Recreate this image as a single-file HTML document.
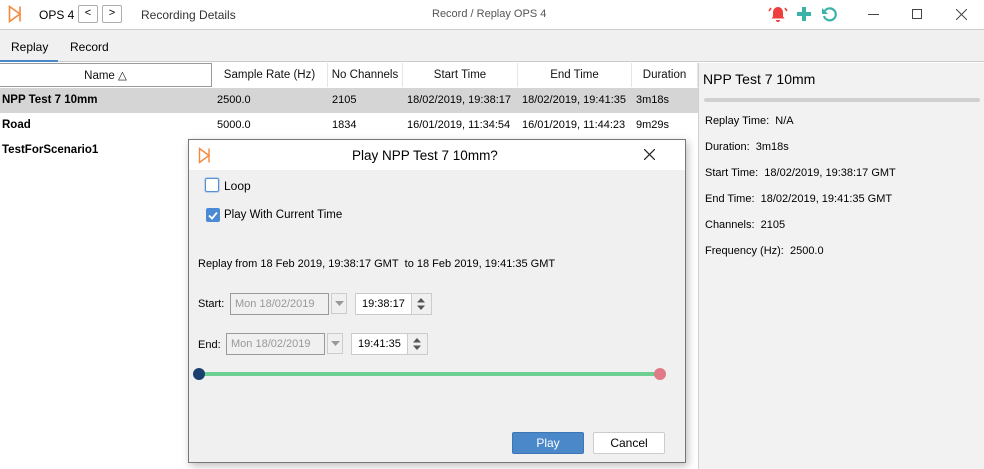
<!DOCTYPE html>
<html><head><style>
*{box-sizing:border-box;margin:0;padding:0}
body{width:984px;height:469px;overflow:hidden;font-family:"Liberation Sans",sans-serif;font-size:11px;color:#000;background:#fff;position:relative}
.a{position:absolute;white-space:nowrap}
.btn{position:absolute;border:1px solid #adadad;background:#fff;border-radius:2px;text-align:center}
.hd{position:absolute;top:63px;height:24px;line-height:24px;text-align:center;border-right:1px solid #e5e5e5;color:#111;font-size:11.5px}
.c{position:absolute;line-height:24px}
</style></head><body>
<div class="a" style="left:0;top:0;width:984px;height:30px;background:#fff;border-bottom:1px solid #ccc"></div>
<svg class="a" style="left:8px;top:5px" width="14" height="18" viewBox="0 0 14 18"><path d="M1.5 1.5 L12 9 L1.5 16.5 Z M12 1.5 V16.5" fill="none" stroke="#f7883c" stroke-width="1.6"/></svg>
<div class="a" style="left:39px;top:8px;font-size:12px">OPS 4</div>
<div class="btn" style="left:78px;top:5px;width:20px;height:18px;line-height:15px">&lt;</div>
<div class="btn" style="left:102px;top:5px;width:20px;height:18px;line-height:15px">&gt;</div>
<div class="a" style="left:141px;top:8px;color:#333;font-size:12px">Recording Details</div>
<div class="a" style="left:432px;top:8px;color:#555">Record / Replay OPS 4</div>
<svg class="a" style="left:768px;top:4px" width="20" height="20" viewBox="0 0 20 20"><path d="M10 3c-3 0-5 2.5-5 5.5v4l-1.5 2h13l-1.5-2v-4C15 5.5 13 3 10 3z M8 16h4a2 2 0 0 1-4 0z" fill="#ef3e3e"/><path d="M3 4l-2 3M17 4l2 3" stroke="#ef3e3e" stroke-width="1.6"/></svg>
<svg class="a" style="left:795px;top:5px" width="18" height="18"><path d="M9 2v14M2 9h14" stroke="#3cb3a8" stroke-width="4"/></svg>
<svg class="a" style="left:820px;top:5px" width="18" height="18" viewBox="0 0 18 18"><path d="M4.5 6.5A6 6 0 1 1 4 11" fill="none" stroke="#3cb3a8" stroke-width="2.2"/><path d="M2 3v6h6z" fill="#3cb3a8"/></svg>
<div class="a" style="left:868px;top:14px;width:11px;height:1px;background:#444"></div>
<div class="a" style="left:912px;top:9px;width:10px;height:10px;border:1px solid #444"></div>
<svg class="a" style="left:956px;top:9px" width="11" height="11"><path d="M0 0L11 11M11 0L0 11" stroke="#444"/></svg>
<div class="a" style="left:0;top:30px;width:984px;height:32px;background:#f0f0f0;border-bottom:1px solid #ccc"></div>
<div class="a" style="left:11px;top:40px;font-size:12px">Replay</div>
<div class="a" style="left:70px;top:40px;font-size:12px">Record</div>
<div class="a" style="left:0;top:60px;width:58px;height:2px;background:#4a88c7"></div>
<div class="hd" style="left:0;width:212px;border:1px solid #999;border-left:0">Name △</div>
<div class="hd" style="left:212px;width:116px">Sample Rate (Hz)</div>
<div class="hd" style="left:328px;width:75px">No Channels</div>
<div class="hd" style="left:403px;width:115px">Start Time</div>
<div class="hd" style="left:518px;width:114px">End Time</div>
<div class="hd" style="left:632px;width:66px">Duration</div>
<div class="a" style="left:0;top:88px;width:698px;height:25px;background:#d5d5d5"></div>
<div class="c" style="left:2px;top:88px;font-weight:bold;font-size:11.5px">NPP Test 7 10mm</div>
<div class="c" style="left:217px;top:88px">2500.0</div><div class="c" style="left:332px;top:88px">2105</div>
<div class="c" style="left:407px;top:88px">18/02/2019, 19:38:17</div><div class="c" style="left:522px;top:88px">18/02/2019, 19:41:35</div><div class="c" style="left:636px;top:88px">3m18s</div>
<div class="c" style="left:2px;top:113px;font-weight:bold;font-size:11.5px">Road</div>
<div class="c" style="left:217px;top:113px">5000.0</div><div class="c" style="left:332px;top:113px">1834</div>
<div class="c" style="left:407px;top:113px">16/01/2019, 11:34:54</div><div class="c" style="left:522px;top:113px">16/01/2019, 11:44:23</div><div class="c" style="left:636px;top:113px">9m29s</div>
<div class="c" style="left:2px;top:138px;font-weight:bold;font-size:11.5px">TestForScenario1</div>
<div class="a" style="left:698px;top:63px;width:286px;height:406px;background:#f2f2f2;border-left:1px solid #d0d0d0"></div>
<div class="a" style="left:703px;top:71px;font-size:14px">NPP Test 7 10mm</div>
<div class="a" style="left:704px;top:98px;width:276px;height:4px;background:#d0d0d0;border-radius:2px"></div>
<div class="a" style="left:705px;top:115px">Replay Time:&nbsp; N/A</div>
<div class="a" style="left:705px;top:141px">Duration:&nbsp; 3m18s</div>
<div class="a" style="left:705px;top:167px">Start Time:&nbsp; 18/02/2019, 19:38:17 GMT</div>
<div class="a" style="left:705px;top:193px">End Time:&nbsp; 18/02/2019, 19:41:35 GMT</div>
<div class="a" style="left:705px;top:219px">Channels:&nbsp; 2105</div>
<div class="a" style="left:705px;top:245px">Frequency (Hz):&nbsp; 2500.0</div>
<div class="a" style="left:188px;top:139px;width:498px;height:324px;background:#f0f0f0;border:1px solid #777;box-shadow:2px 3px 8px rgba(0,0,0,.25)"></div>
<div class="a" style="left:189px;top:140px;width:496px;height:30px;background:#fff"></div>
<svg class="a" style="left:198px;top:147px" width="13" height="17" viewBox="0 0 13 17"><path d="M1.5 1.5 L11 8.5 L1.5 15.5 Z M11 1.5 V15.5" fill="none" stroke="#f7883c" stroke-width="1.4"/></svg>
<div class="a" style="left:352px;top:148px;font-size:13.5px">Play NPP Test 7 10mm?</div>
<svg class="a" style="left:644px;top:149px" width="11" height="11"><path d="M0 0L11 11M11 0L0 11" stroke="#222" stroke-width="1.2"/></svg>
<div class="a" style="left:205px;top:178px;width:14px;height:14px;border:1px solid #5b8fd0;background:#fff;border-radius:2px;box-shadow:0 0 0 1px #bcd3ee"></div>
<div class="a" style="left:224px;top:179px;font-size:12px">Loop</div>
<div class="a" style="left:206px;top:208px;width:14px;height:14px;background:#4a8ad4;border-radius:2px"></div>
<svg class="a" style="left:206px;top:208px" width="14" height="14"><path d="M3 7.5l3 3 5-6" fill="none" stroke="#fff" stroke-width="1.8"/></svg>
<div class="a" style="left:224px;top:209px;font-size:11.5px">Play With Current Time</div>
<div class="a" style="left:198px;top:258px">Replay from 18 Feb 2019, 19:38:17 GMT&nbsp; to 18 Feb 2019, 19:41:35 GMT</div>
<div class="a" style="left:198px;top:298px">Start:</div>
<div class="a" style="left:230px;top:293px;width:99px;height:22px;border:1px solid #999;background:#f0f0f0;color:#999;line-height:20px;padding-left:4px">Mon 18/02/2019</div>
<div class="a" style="left:331px;top:293px;width:16px;height:21px;border:1px solid #ccc;background:#f0f0f0"></div>
<svg class="a" style="left:335px;top:301px" width="9" height="5"><path d="M0 0h9L4.5 5z" fill="#999"/></svg>
<div class="a" style="left:355px;top:293px;width:56px;height:22px;border:1px solid #ccc;border-right:0;background:#fff;line-height:20px;padding-left:6px">19:38:17</div>
<div class="a" style="left:411px;top:293px;width:21px;height:22px;border:1px solid #ccc;background:#f0f0f0"></div>
<svg class="a" style="left:416px;top:297px" width="10" height="14"><path d="M1 5.5h8L5 1zM1 8.5h8L5 13z" fill="#555"/></svg>
<div class="a" style="left:198px;top:339px">End:</div>
<div class="a" style="left:226px;top:333px;width:99px;height:22px;border:1px solid #999;background:#f0f0f0;color:#999;line-height:20px;padding-left:4px">Mon 18/02/2019</div>
<div class="a" style="left:327px;top:333px;width:16px;height:21px;border:1px solid #ccc;background:#f0f0f0"></div>
<svg class="a" style="left:331px;top:341px" width="9" height="5"><path d="M0 0h9L4.5 5z" fill="#999"/></svg>
<div class="a" style="left:351px;top:333px;width:56px;height:22px;border:1px solid #ccc;border-right:0;background:#fff;line-height:20px;padding-left:6px">19:41:35</div>
<div class="a" style="left:407px;top:333px;width:21px;height:22px;border:1px solid #ccc;background:#f0f0f0"></div>
<svg class="a" style="left:412px;top:337px" width="10" height="14"><path d="M1 5.5h8L5 1zM1 8.5h8L5 13z" fill="#555"/></svg>
<div class="a" style="left:198px;top:372px;width:462px;height:4px;background:#6dcf94"></div>
<div class="a" style="left:193px;top:368px;width:12px;height:12px;border-radius:50%;background:#1b3f6e"></div>
<div class="a" style="left:654px;top:368px;width:12px;height:12px;border-radius:50%;background:#e07a86"></div>
<div class="a" style="left:512px;top:432px;width:72px;height:22px;background:#4a88c9;border:1px solid #3c76b4;border-radius:2px;color:#fff;text-align:center;line-height:20px;font-size:12px">Play</div>
<div class="btn" style="left:593px;top:432px;width:72px;height:22px;line-height:20px;border-color:#ccc;font-size:12px">Cancel</div>
</body></html>
